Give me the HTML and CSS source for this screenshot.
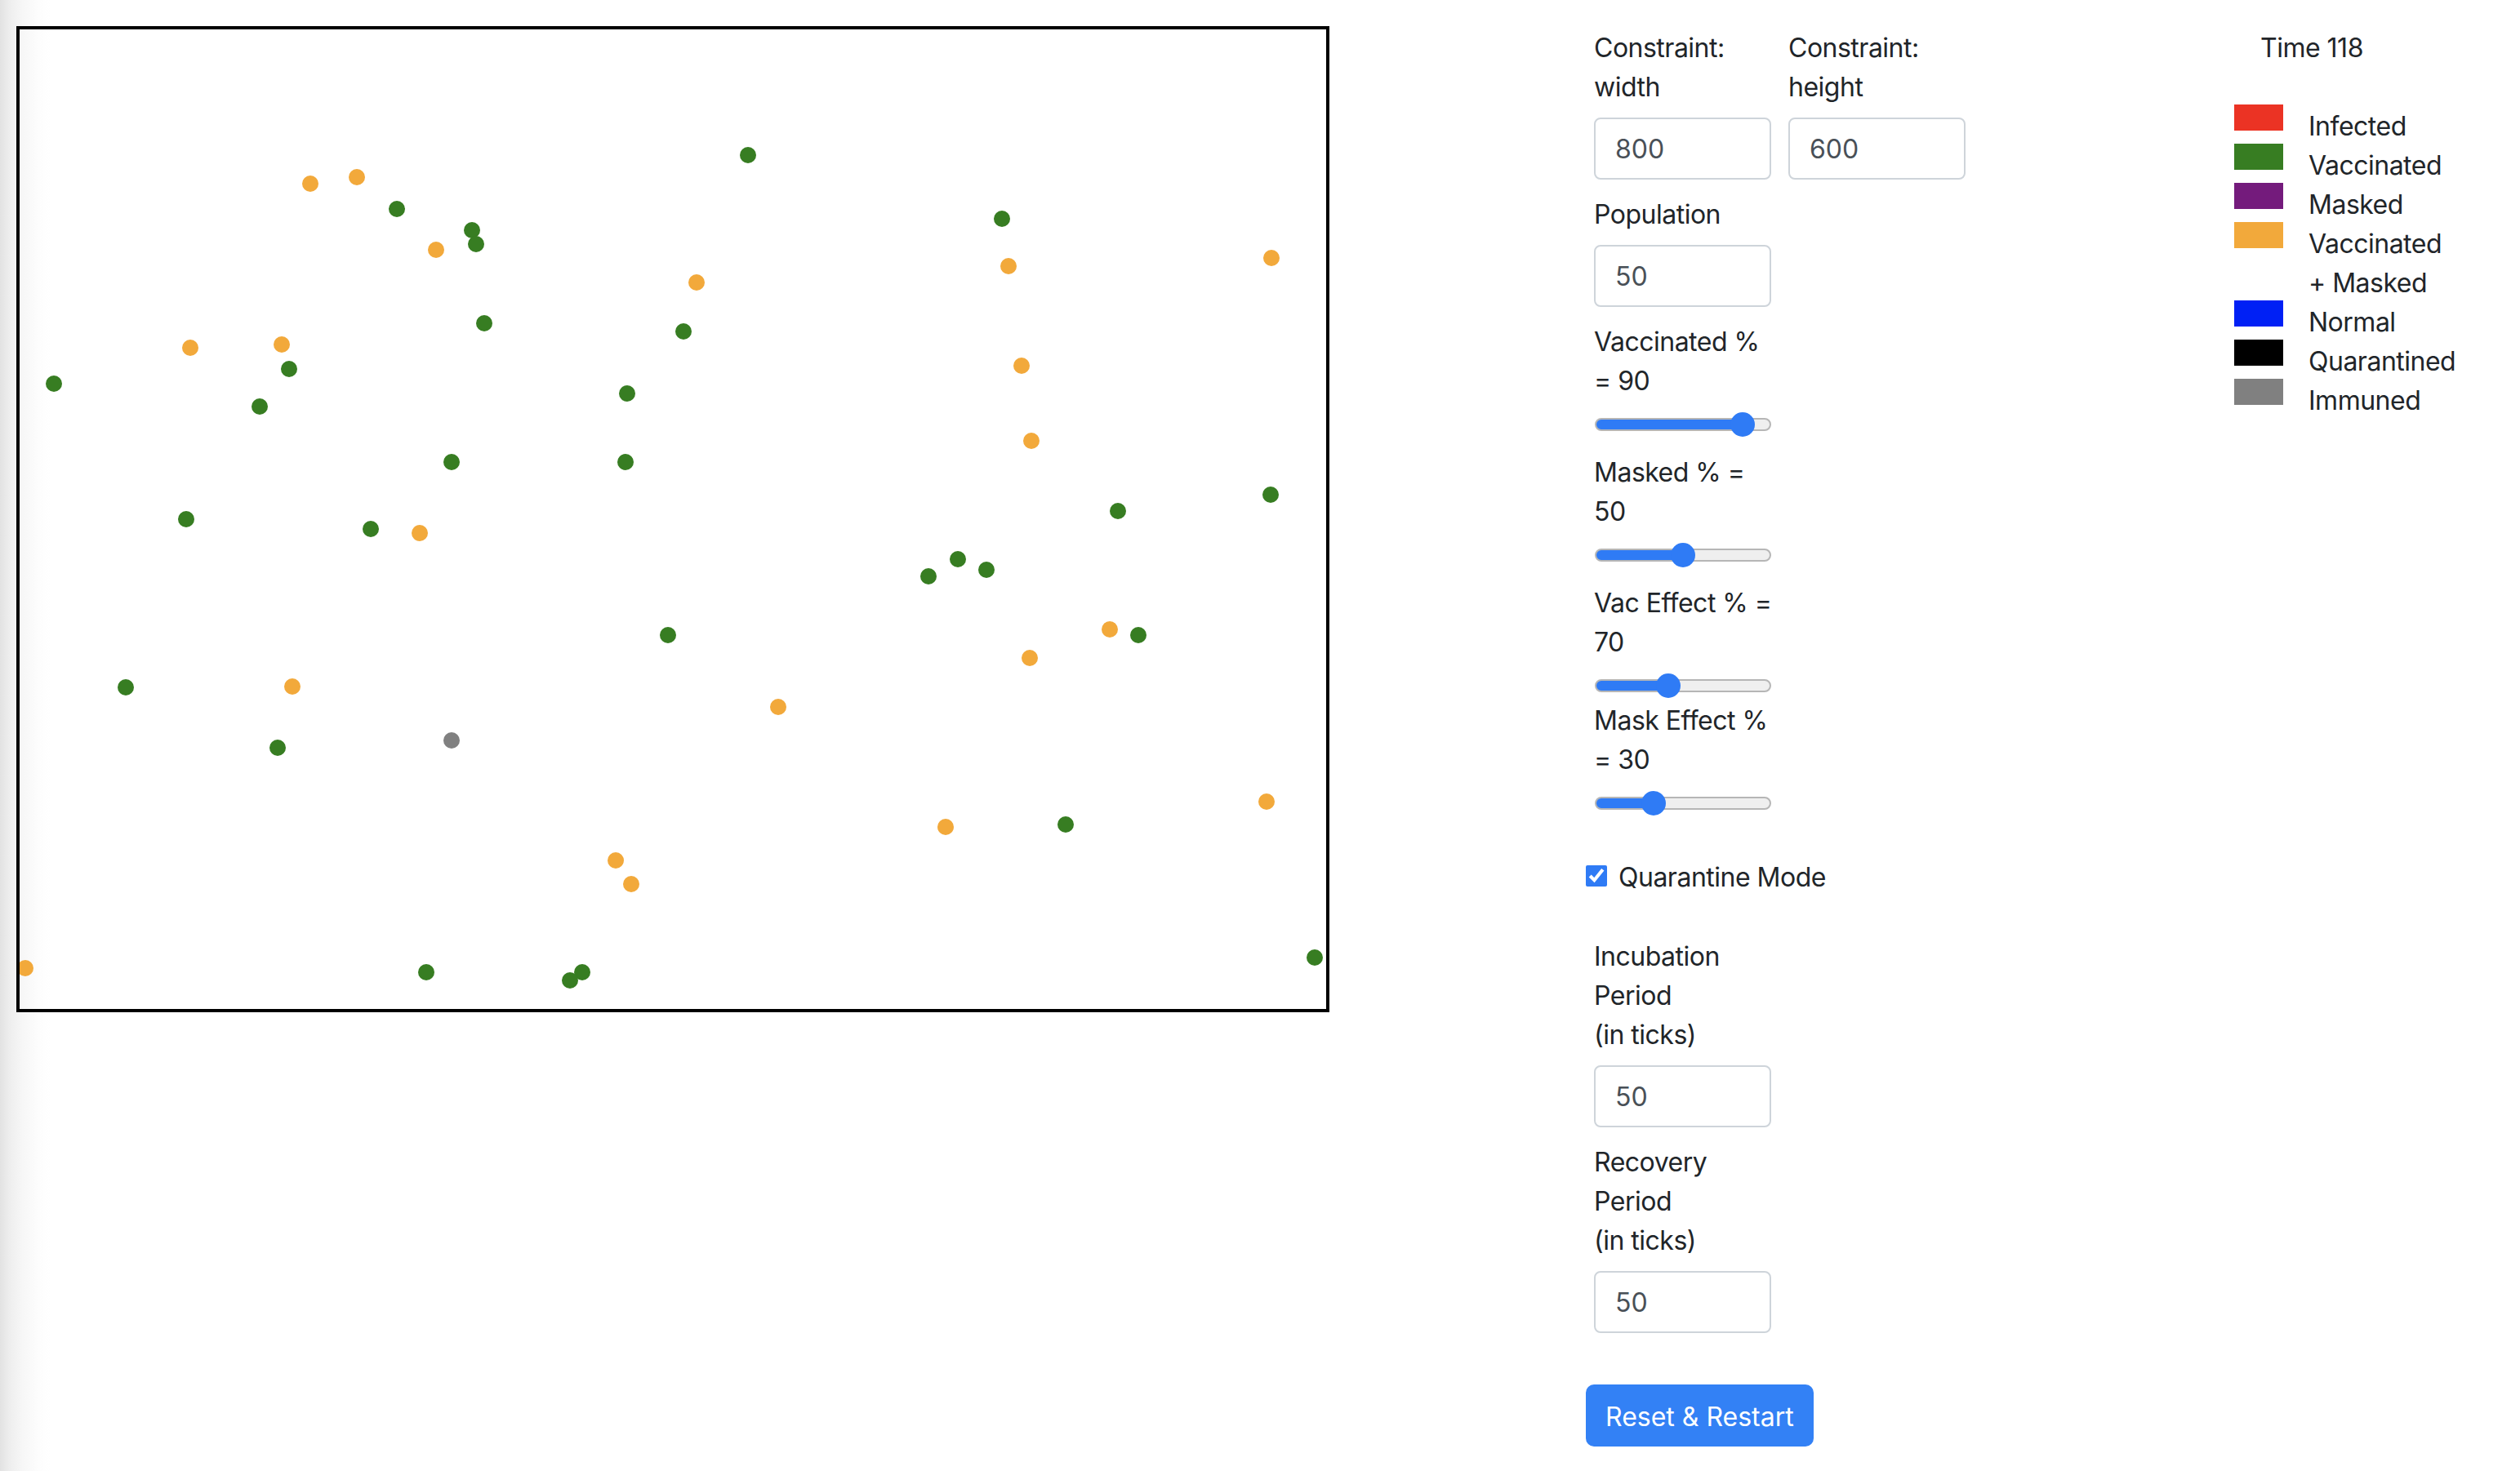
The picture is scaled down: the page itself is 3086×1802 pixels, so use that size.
FILE: index.html
```html
<!DOCTYPE html>
<html lang="en">
<head>
<meta charset="utf-8">
<title>Epidemic Simulation</title>
<link rel="stylesheet" href="styles.css">
</head>
<body>
<div class="page">
  <div class="board">
    <svg class="sim" width="1600" height="1200" viewBox="0 0 1600 1200">
      <g class="vac">
        <circle cx="892" cy="154" r="10"/>
        <circle cx="462" cy="220" r="10"/>
        <circle cx="554" cy="246" r="10"/>
        <circle cx="559" cy="263" r="10"/>
        <circle cx="1203" cy="232" r="10"/>
        <circle cx="569" cy="360" r="10"/>
        <circle cx="813" cy="370" r="10"/>
        <circle cx="330" cy="416" r="10"/>
        <circle cx="42" cy="434" r="10"/>
        <circle cx="294" cy="462" r="10"/>
        <circle cx="744" cy="446" r="10"/>
        <circle cx="529" cy="530" r="10"/>
        <circle cx="742" cy="530" r="10"/>
        <circle cx="1532" cy="570" r="10"/>
        <circle cx="1345" cy="590" r="10"/>
        <circle cx="204" cy="600" r="10"/>
        <circle cx="430" cy="612" r="10"/>
        <circle cx="1149" cy="649" r="10"/>
        <circle cx="1184" cy="662" r="10"/>
        <circle cx="1113" cy="670" r="10"/>
        <circle cx="794" cy="742" r="10"/>
        <circle cx="1370" cy="742" r="10"/>
        <circle cx="130" cy="806" r="10"/>
        <circle cx="316" cy="880" r="10"/>
        <circle cx="1281" cy="974" r="10"/>
        <circle cx="498" cy="1155" r="10"/>
        <circle cx="689" cy="1155" r="10"/>
        <circle cx="674" cy="1165" r="10"/>
        <circle cx="1586" cy="1137" r="10"/>
      </g>
      <g class="vacmask">
        <circle cx="356" cy="189" r="10"/>
        <circle cx="413" cy="181" r="10"/>
        <circle cx="510" cy="270" r="10"/>
        <circle cx="1211" cy="290" r="10"/>
        <circle cx="1533" cy="280" r="10"/>
        <circle cx="829" cy="310" r="10"/>
        <circle cx="209" cy="390" r="10"/>
        <circle cx="321" cy="386" r="10"/>
        <circle cx="1227" cy="412" r="10"/>
        <circle cx="1239" cy="504" r="10"/>
        <circle cx="490" cy="617" r="10"/>
        <circle cx="1335" cy="735" r="10"/>
        <circle cx="1237" cy="770" r="10"/>
        <circle cx="334" cy="805" r="10"/>
        <circle cx="929" cy="830" r="10"/>
        <circle cx="1527" cy="946" r="10"/>
        <circle cx="1134" cy="977" r="10"/>
        <circle cx="730" cy="1018" r="10"/>
        <circle cx="749" cy="1047" r="10"/>
        <circle cx="7" cy="1150" r="10"/>
      </g>
      <g class="immune">
        <circle cx="529" cy="871" r="10"/>
      </g>
    </svg>
  </div>

  <form class="controls">
    <div class="pair">
      <div class="field">
        <label class="lbl">Constraint:<br>width</label>
        <input class="num" type="text" value="800">
      </div>
      <div class="field">
        <label class="lbl">Constraint:<br>height</label>
        <input class="num" type="text" value="600">
      </div>
    </div>
    <div class="field">
      <label class="lbl">Population</label>
      <input class="num" type="text" value="50">
    </div>
    <div class="field">
      <label class="lbl">Vaccinated %<br>= 90</label>
      <input class="range" type="range" min="0" max="100" value="90" style="--v:0.9">
    </div>
    <div class="field">
      <label class="lbl">Masked % =<br>50</label>
      <input class="range" type="range" min="0" max="100" value="50" style="--v:0.5">
    </div>
    <div class="field tight">
      <label class="lbl">Vac Effect % =<br>70</label>
      <input class="range" type="range" min="50" max="100" value="70" style="--v:0.4">
    </div>
    <div class="field">
      <label class="lbl">Mask Effect %<br>= 30</label>
      <input class="range" type="range" min="0" max="100" value="30" style="--v:0.3">
    </div>
    <label class="check"><input class="box" type="checkbox" checked><span class="check-text">Quarantine Mode</span></label>
    <div class="field gap-top">
      <label class="lbl">Incubation<br>Period<br>(in ticks)</label>
      <input class="num" type="text" value="50">
    </div>
    <div class="field">
      <label class="lbl">Recovery<br>Period<br>(in ticks)</label>
      <input class="num" type="text" value="50">
    </div>
    <button class="btn" type="button">Reset &amp; Restart</button>
  </form>

  <div class="legend">
    <div class="time">Time 118</div>
    <div class="row"><span class="sw infected"></span><span class="name">Infected</span></div>
    <div class="row"><span class="sw vaccinated"></span><span class="name">Vaccinated</span></div>
    <div class="row"><span class="sw masked"></span><span class="name">Masked</span></div>
    <div class="row"><span class="sw both"></span><span class="name">Vaccinated<br>+ Masked</span></div>
    <div class="row"><span class="sw normal"></span><span class="name">Normal</span></div>
    <div class="row"><span class="sw quarantined"></span><span class="name">Quarantined</span></div>
    <div class="row"><span class="sw immuned"></span><span class="name">Immuned</span></div>
  </div>
</div>
</body>
</html>
```

FILE: styles.css
```css
html, body {
  margin: 0;
  padding: 0;
}

body {
  min-height: 1802px;
  background: linear-gradient(to right, #e2e2e2 0, #eeeeee 12px, #f7f7f7 28px, #fdfdfd 48px, #ffffff 62px);
  font-family: Inter, "Noto Sans", "Liberation Sans", sans-serif;
  font-size: 32px;
  line-height: 48px;
  letter-spacing: -0.5px;
  color: #212529;
}

.page {
  display: flex;
  align-items: flex-start;
  gap: 314px;
  padding: 32px 0 0 20px;
}

/* canvas */
.board {
  flex: none;
  width: 1600px;
  height: 1200px;
  border: 4px solid #000;
}

.sim {
  display: block;
  overflow: hidden;
}

.vac circle { fill: #377d22; }
.vacmask circle { fill: #f2a93b; }
.immune circle { fill: #808080; }

/* controls */
.controls {
  flex: none;
  width: 480px;
  display: flex;
  flex-direction: column;
  align-items: flex-start;
  margin: 0;
}

.pair {
  display: flex;
  gap: 11px;
}

.field {
  display: flex;
  flex-direction: column;
  align-items: flex-start;
  padding-left: 10px;
  margin-bottom: 16px;
}

.field.tight {
  margin-bottom: 0;
}

.field.gap-top {
  margin-top: 48px;
}

.lbl {
  display: block;
  padding-top: 3px;
  margin-bottom: 13px;
  white-space: nowrap;
}

.num {
  box-sizing: border-box;
  width: 217px;
  height: 76px;
  margin: 0;
  padding: 0 24px;
  border: 2px solid #ced4da;
  border-radius: 8px;
  background: #fff;
  font: inherit;
  line-height: 48px;
  color: #495057;
}

.range {
  -webkit-appearance: none;
  appearance: none;
  display: block;
  width: 216px;
  height: 32px;
  margin: 0 0 0 1px;
  padding: 0;
  background: transparent;
}

.range::-webkit-slider-runnable-track {
  box-sizing: border-box;
  height: 16px;
  border: 2px solid #b6b6b6;
  border-radius: 8px;
  background: linear-gradient(to right, #2f7bf5 0, #2f7bf5 calc(15px + (100% - 30px) * var(--v)), #efefef 0);
}

.range::-webkit-slider-thumb {
  -webkit-appearance: none;
  appearance: none;
  width: 30px;
  height: 30px;
  margin-top: -9px;
  border: none;
  border-radius: 50%;
  background: #2f7bf5;
}

.check {
  display: flex;
  align-items: center;
  gap: 14px;
  margin-top: 33px;
  height: 48px;
}

.check-text {
  padding-top: 4px;
}

.box {
  width: 26px;
  height: 26px;
  margin: 0;
  accent-color: #2f7bf5;
}

.btn {
  margin-top: 47px;
  height: 76px;
  padding: 3px 24px 0;
  border: none;
  border-radius: 10px;
  background: #3381f5;
  color: #fff;
  font: inherit;
  line-height: 48px;
}

/* legend */
.legend {
  flex: none;
  display: flex;
  flex-direction: column;
}

.time {
  padding-top: 3px;
  padding-left: 32px;
  margin-bottom: 45px;
}

.row {
  display: flex;
  align-items: flex-start;
  gap: 31px;
}

.sw {
  flex: none;
  width: 60px;
  height: 32px;
}

.name {
  white-space: nowrap;
  padding-top: 3px;
  margin-bottom: -3px;
}

.infected { background: #eb3324; }
.vaccinated { background: #377d22; }
.masked { background: #741b7c; }
.both { background: #f2a93b; }
.normal { background: #0020f5; }
.quarantined { background: #000; }
.immuned { background: #808080; }
```
